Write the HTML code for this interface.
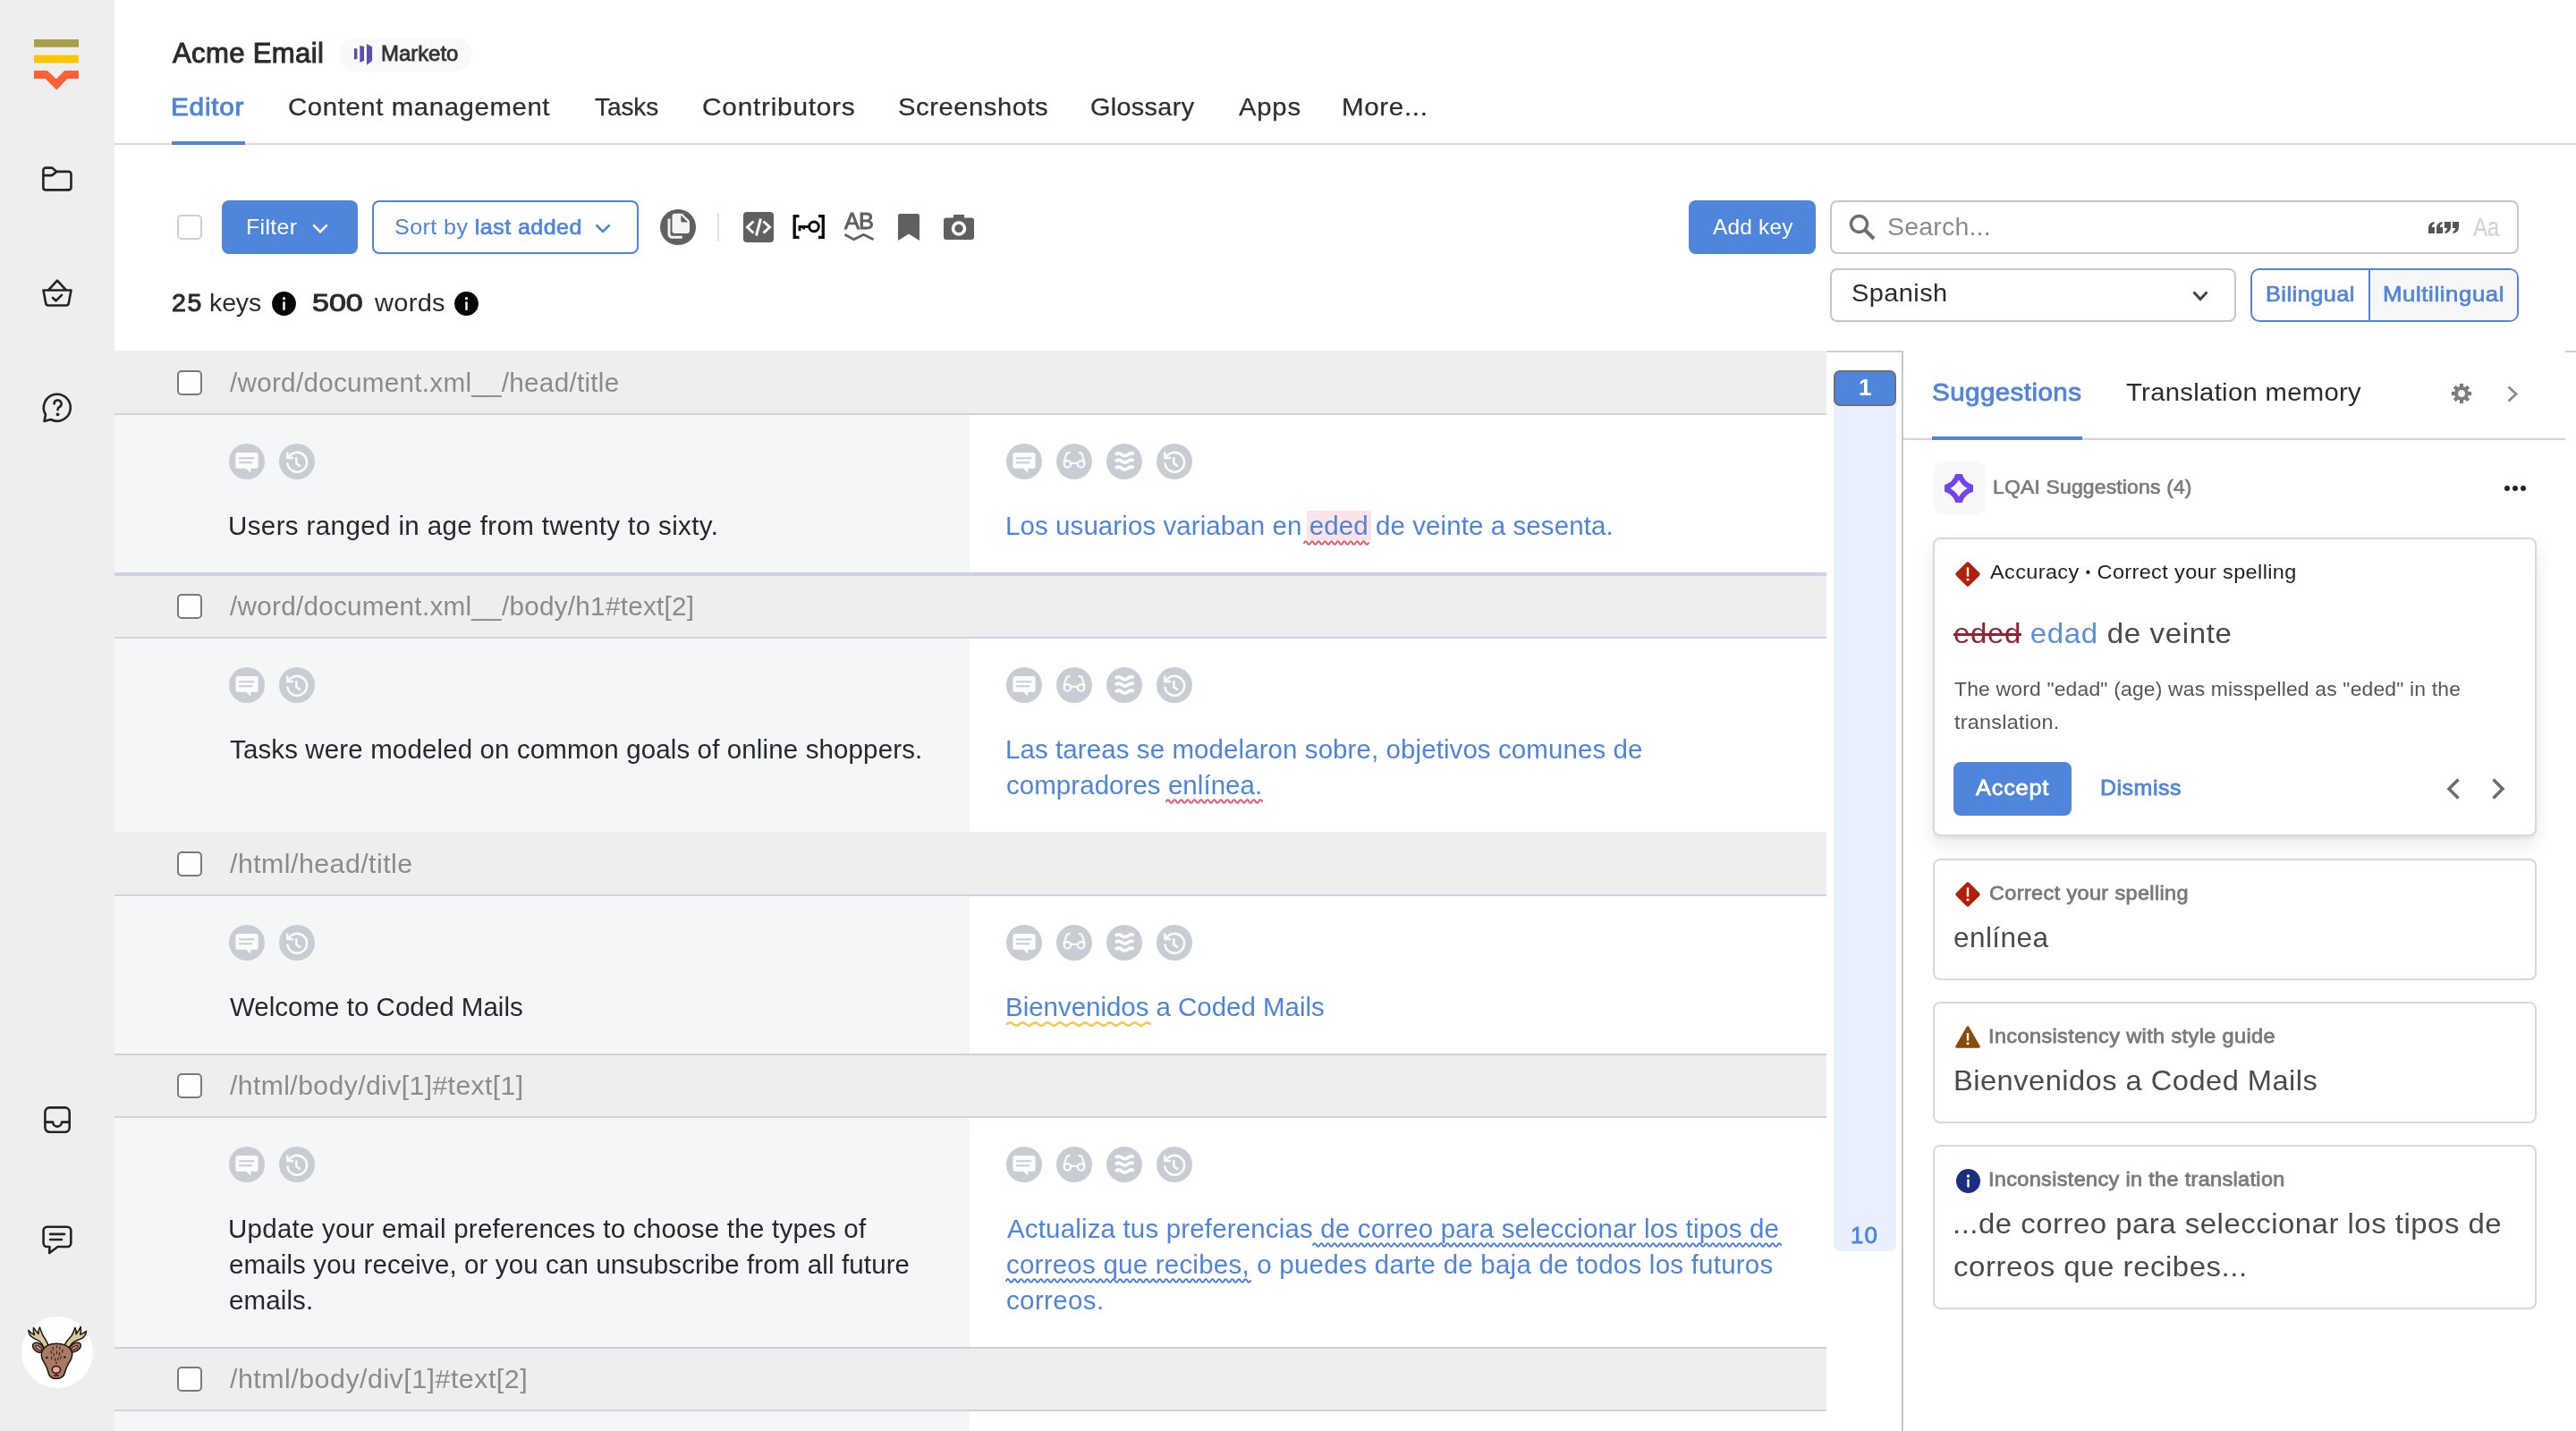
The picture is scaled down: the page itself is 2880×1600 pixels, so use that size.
<!DOCTYPE html>
<html lang="en"><head><meta charset="utf-8"><title>Acme Email - Editor</title>
<style>
*{margin:0;padding:0;box-sizing:border-box}
html,body{width:2880px;height:1600px;overflow:hidden;background:#fff}
@media (max-width:2000px){html{zoom:.5}}
body{position:relative;font-family:"Liberation Sans",sans-serif;color:#2b2b2b}
.a{position:absolute}
.t{position:absolute;white-space:nowrap;line-height:1;will-change:transform}
.t b{font-weight:700}
svg{position:absolute;overflow:visible}
.cb{position:absolute;width:28px;height:28px;border:2px solid #7a7a7a;border-radius:5px;background:#fff;left:198px}
.ic{position:absolute;width:40px;height:40px;border-radius:50%;background:#c9ccd2}
.hl{background:#fbe3e7;padding:0 3px;margin:0 -3px}
.hd{position:absolute;left:128px;width:1914px;background:#eeeeee}
.ln{position:absolute;left:128px;width:956px;height:2px;background:#d2d3d4}
.src{position:absolute;left:128px;width:956px;background:#f5f6f8}
.card{position:absolute;left:2160.500px;width:675.500px;border:2px solid #d9d9d9;border-radius:8px;background:#fff}
</style></head>
<body>
<div class="a" style="left:0;top:0;width:128px;height:1600px;background:#eeeeee"></div>
<svg style="left:38px;top:44px" width="50" height="57" viewBox="0 0 50 57"><rect x="0" y="0" width="50" height="8.700" fill="#a5a04b"/><rect x="0" y="17.600" width="50" height="8.900" fill="#fdc604"/><path d="M0 35.100h15l9.800 9.100 9.300-9.100H50v8.800H37.300l-12 12.500-12.500-12.500H0z" fill="#ff6036"/></svg>
<svg style="left:47px;top:186px" width="34" height="28" viewBox="0 0 34 28"><path d="M4.100 1.600H11l5.400 4.300H29.800a2.700 2.700 0 0 1 2.700 2.700V23.700a2.700 2.700 0 0 1-2.700 2.700H4.100a2.700 2.700 0 0 1-2.700-2.700V4.300a2.700 2.700 0 0 1 2.700-2.700zM1.400 10.100H11l5.400-4.200" fill="none" stroke="#242424" stroke-width="2.600" stroke-linejoin="round" stroke-linecap="round"/></svg>
<svg style="left:47px;top:312px" width="34" height="32" viewBox="0 0 34 32"><path d="M1.500 12.500h31l-2.700 14.500a3 3 0 0 1-3 2.500H7.200a3 3 0 0 1-3-2.500z M7 12.500 17 1.700 27 12.500 M12 21l3.500 3.300 6.500-6.500" fill="none" stroke="#242424" stroke-width="2.600" stroke-linejoin="round" stroke-linecap="round"/></svg>
<svg style="left:47px;top:438px" width="35" height="35" viewBox="0 0 35 35"><path d="M4 25.500A15 15 0 1 1 9.800 31L2.500 33z" fill="none" stroke="#242424" stroke-width="2.600" stroke-linejoin="round" stroke-linecap="round"/><path d="M13.600 13.500a4 4 0 1 1 5.600 3.700c-1.200.7-1.700 1.500-1.700 3" fill="none" stroke="#242424" stroke-width="2.600" stroke-linejoin="round" stroke-linecap="round"/><circle cx="17.500" cy="25.300" r="1.900" fill="#262626"/></svg>
<svg style="left:49px;top:1236.700px" width="30" height="30" viewBox="0 0 30 30"><rect x="1.400" y="1.400" width="27.300" height="27.300" rx="5" fill="none" stroke="#242424" stroke-width="2.600" stroke-linejoin="round" stroke-linecap="round"/><path d="M1.400 17.600h8.700c0 2.900 2.200 5 5 5s5-2.100 5-5h8.600" fill="none" stroke="#242424" stroke-width="2.600" stroke-linejoin="round" stroke-linecap="round"/></svg>
<svg style="left:47px;top:1369.500px" width="34" height="33" viewBox="0 0 34 33"><path d="M5.600 1.700H28.300a4 4 0 0 1 4 4V20a4 4 0 0 1-4 4H17.500l-9.300 7 .300-7H5.600a4 4 0 0 1-4-4V5.700a4 4 0 0 1 4-4zM9.100 9.900H25M9.100 16H22" fill="none" stroke="#242424" stroke-width="2.600" stroke-linejoin="round" stroke-linecap="round"/></svg>
<div class="a" style="left:24px;top:1472px;width:80px;height:80px;border-radius:50%;background:#fff"></div>
<svg style="left:24px;top:1472px" width="80" height="80" viewBox="0 0 80 80">
<g stroke="#1f160f" stroke-width="1.500" stroke-linejoin="round">
<path d="M30.500 33C28 27.500 26 24 24 21.500 22.500 18 21.500 15 20.400 12c-1.300 2.400-1.700 4.800-1.400 7.500C16.800 17 15 14.800 13.400 12.400c-.400 2.800 0 5.500 1.100 8.100C12 19.500 9.800 17.800 7.800 15.600c.300 3.300 1.800 5.800 4.200 7.600 2.600 2 5.500 2.800 8 4.300 2.400 1.800 4.200 4.500 5.500 8z" fill="#d8c99c"/>
<path d="M47.800 32.500C50.500 27 53.500 24 56 21.500 57.800 18.500 58.900 15.500 59.900 12.400c1.300 2.400 1.500 4.800 1.100 7.400 2.200-2.400 3.900-5.300 5.200-8.400.700 3 .500 5.900-.500 8.800 2.500-1 4.800-2.400 6.800-3.900-.200 3.500-1.800 6-4.500 7.800-2.800 1.800-6 2.300-8.800 3.800-2.600 1.500-4.500 3.800-6 7z" fill="#d8c99c"/>
<ellipse cx="18.600" cy="34.700" rx="6.800" ry="4.600" transform="rotate(38 18.600 34.700)" fill="#a87b66"/>
<ellipse cx="59.900" cy="34.500" rx="7.200" ry="4.400" transform="rotate(-33 59.900 34.500)" fill="#a87b66"/>
<ellipse cx="19.200" cy="35.300" rx="4" ry="1.700" transform="rotate(38 19.200 35.300)" fill="#d98a8c" stroke-width="1"/>
<ellipse cx="59.300" cy="35" rx="4.300" ry="1.600" transform="rotate(-33 59.300 35)" fill="#d98a8c" stroke-width="1"/>
<path d="M39.300 30.200C46 30.200 52 32 55.500 37.500 57.500 41.500 57 45.500 54.500 49.500 51 54.500 49.500 58 48.500 62.500 47.500 67.500 43.500 69.500 39 69.500S31 67.500 30 62.500C29 58 27.500 54.500 24.500 50 22 46 21.500 42 23.500 38 26.500 32 33 30.200 39.300 30.200z" fill="#a87b66"/>
<ellipse cx="38.900" cy="59.400" rx="4.600" ry="3.900" fill="#f4a58f"/>
<path d="M38.900 63.300v2.800M36 65.500c1.800 1 4 1 5.800 0" fill="none" stroke-width="1.200"/>
</g>
<g stroke="#4a2a1c" stroke-width="1.300" stroke-linecap="round"><path d="M35 34.500l.500 2.500M39.500 32.500v2.500M43 34l-.400 2.600M33 38.500l.500 2.600M36 41.500l.400 2.500M39.500 39v2.600M42.500 40.500l-.300 2.600M46 37.500l-.500 2.500M33.500 45.500l.400 2M37.500 47l.400 2.400M41 46l-.300 2.400M44 45l-.400 2.200M39 51v1.600"/></g>
<circle cx="28.400" cy="46" r="1.200" fill="#1f160f"/><circle cx="48.400" cy="45.500" r="1.200" fill="#1f160f"/>
</svg>
<div class="a" style="left:128px;top:160px;width:2752px;height:2px;background:#dddddd"></div>
<div class="a" style="left:192px;top:158px;width:82px;height:4px;background:#4f85db"></div>
<div class="a" style="left:379px;top:42px;width:149px;height:38px;border-radius:19px;background:#f9f9f9"></div>
<svg style="left:395px;top:48px" width="22" height="26" viewBox="0 0 22 26"><g fill="#5c4db1"><path d="M.900 5.900l3.500.500v11.300l-3.500 1z"/><path d="M7.300 3l4.700 1v16.100l-4.700 1.700z"/><path d="M15 .900l6.100 3.500V20L15 24.800z"/></g></svg>
<div class="a" style="left:198px;top:240px;width:28px;height:28px;border:2px solid #cfcfcf;border-radius:5px;background:#fff"></div>
<div class="a" style="left:248px;top:224px;width:152px;height:60px;border-radius:8px;background:#4f85db"></div>
<svg style="left:349px;top:250px" width="18" height="11" viewBox="0 0 18 11"><path d="M1.200 1.300l7.800 8 7.800-8" fill="none" stroke="#fff" stroke-width="2.500"/></svg>
<div class="a" style="left:416px;top:224px;width:298px;height:60px;border-radius:8px;border:2px solid #4f85db;background:#fff"></div>
<svg style="left:665px;top:250px" width="18" height="11" viewBox="0 0 18 11"><path d="M1.500 1.500l7.500 7.500 7.500-7.500" fill="none" stroke="#4f85db" stroke-width="2.600"/></svg>
<svg style="left:738px;top:234px" width="40" height="40" viewBox="0 0 40 40"><circle cx="20" cy="20" r="20" fill="#606060"/><path d="M16.500 4.700h8.200l8.300 8.300v11a3 3 0 0 1-3 3H16.500a3 3 0 0 1-3-3V7.700a3 3 0 0 1 3-3z" fill="#f4f4f4"/><path d="M23.300 6.600v6.400a1.500 1.500 0 0 0 1.500 1.500h6.400z" fill="#606060"/><path d="M10 10.400v17.600a3.200 3.200 0 0 0 3.200 3.200H24.800" fill="none" stroke="#f4f4f4" stroke-width="2.900"/></svg>
<div class="a" style="left:802px;top:238px;width:2px;height:32px;background:#e0e0e0"></div>
<svg style="left:831px;top:237px" width="34" height="34" viewBox="0 0 34 34"><rect width="34" height="34" rx="4" fill="#606060"/><path d="M11.500 10.500l-7 6.500 7 6.500M22.500 10.500l7 6.500-7 6.500M19.500 7.500l-5 19" fill="none" stroke="#fff" stroke-width="3"/></svg>
<svg style="left:886px;top:240px" width="37" height="27" viewBox="0 0 37 27"><path d="M7.500 1.700H2.200v23.600h5.300M29 1.700h5.300v23.600H29" fill="none" stroke="#0c0c0c" stroke-width="3.300"/><circle cx="24" cy="13.400" r="5.300" fill="none" stroke="#0c0c0c" stroke-width="3"/><path d="M18.700 13.400H6.500M8 13.400v4.800M12.600 13.400v3.200" fill="none" stroke="#0c0c0c" stroke-width="3"/></svg>
<div class="t" style="left:943.800px;top:235.31px;font-size:25.500px;color:#606060;letter-spacing:-.9px;-webkit-text-stroke:.9px #606060">AB</div>
<svg style="left:943.500px;top:260.500px" width="34" height="9" viewBox="0 0 34 9"><path d="M.500 1.300l10 5.400 11-5.400 11 5.400" fill="none" stroke="#606060" stroke-width="2.800"/></svg>
<svg style="left:1004px;top:239px" width="24" height="30" viewBox="0 0 24 30"><path d="M2.500 0h19a2.500 2.500 0 0 1 2.500 2.500V30l-12-7.500L0 30V2.500A2.500 2.500 0 0 1 2.500 0z" fill="#606060"/></svg>
<svg style="left:1055px;top:240px" width="34" height="28" viewBox="0 0 34 28"><path d="M11 0h12v4h-12z M3 3.500h28a3 3 0 0 1 3 3V25a3 3 0 0 1-3 3H3a3 3 0 0 1-3-3V6.500a3 3 0 0 1 3-3z" fill="#606060"/><circle cx="17" cy="15.500" r="6.500" fill="none" stroke="#fff" stroke-width="3.600"/></svg>
<svg style="left:304.2px;top:326.200px" width="27" height="27" viewBox="0 0 27 27"><circle cx="13.500" cy="13.500" r="13.400" fill="#050505"/><circle cx="13.500" cy="7.700" r="1.600" fill="#fff"/><rect x="12.300" y="11.300" width="2.400" height="9.500" fill="#fff"/></svg>
<svg style="left:508.4px;top:326.200px" width="27" height="27" viewBox="0 0 27 27"><circle cx="13.500" cy="13.500" r="13.400" fill="#050505"/><circle cx="13.500" cy="7.700" r="1.600" fill="#fff"/><rect x="12.300" y="11.300" width="2.400" height="9.500" fill="#fff"/></svg>
<div class="a" style="left:1888px;top:224px;width:142px;height:60px;border-radius:8px;background:#4f85db"></div>
<div class="a" style="left:2046px;top:224px;width:770px;height:60px;border-radius:8px;border:2px solid #c6c6c6;background:#fff"></div>
<svg style="left:2067px;top:239px" width="30" height="30" viewBox="0 0 30 30"><circle cx="11.500" cy="11.500" r="9" fill="none" stroke="#6d6d6d" stroke-width="3.400"/><path d="M18 18l10 10" stroke="#6d6d6d" stroke-width="4" fill="none"/></svg>
<svg style="left:2715px;top:248px" width="34" height="13" viewBox="0 0 34 13"><g fill="#555"><path d="M0 13V7.500C0 3 2.500.600 6.500 0v2.300C4.800 2.800 4 4 4 6h3v7z"/><path d="M9 13V7.500C9 3 11.500.600 15.500 0v2.300C13.800 2.800 13 4 13 6h3v7z"/><path d="M25 0v5.500C25 10 22.500 12.400 18.500 13v-2.300c1.700-.5 2.500-1.700 2.500-3.700h-3V0z"/><path d="M34 0v5.500C34 10 31.500 12.400 27.500 13v-2.300c1.700-.5 2.500-1.700 2.500-3.700h-3V0z"/></g></svg>
<div class="a" style="left:2046px;top:300px;width:454px;height:60px;border-radius:8px;border:2px solid #c6c6c6;background:#fff"></div>
<svg style="left:2451px;top:325px" width="18" height="12" viewBox="0 0 18 12"><path d="M1.500 1.500l7.500 8 7.500-8" fill="none" stroke="#444" stroke-width="3"/></svg>
<div class="a" style="left:2516px;top:300px;width:300px;height:60px;border-radius:10px;border:2px solid #4f85db;background:#fff;overflow:hidden"><div class="a" style="left:130px;top:0;width:2px;height:60px;background:#4f85db"></div><div class="a" style="left:132px;top:0;width:170px;height:60px;background:#f7f7f7"></div></div>
<div class="hd" style="top:392px;height:70px"></div>
<div class="ln" style="top:462px"></div><div class="ln" style="top:462px;left:1084px;width:958px;background:#d2d2d5"></div>
<div class="src" style="top:464px;height:176px"></div>
<div class="cb" style="top:414px"></div>
<div class="ic" style="left:256px;top:496px"></div>
<svg style="left:256px;top:496px" width="40" height="40" viewBox="0 0 40 40"><path d="M10 10.100h20a2.600 2.600 0 0 1 2.600 2.600v12.500a2.600 2.600 0 0 1-2.600 2.600h-5.700v4.600l-5.300-4.600H10a2.600 2.600 0 0 1-2.600-2.600V12.700A2.600 2.600 0 0 1 10 10.100z" fill="#fafbfc"/><path d="M11.100 16.200h17.200M11.100 21.300h15" stroke="#c9ccd2" stroke-width="2" fill="none"/></svg>
<div class="ic" style="left:312px;top:496px"></div>
<svg style="left:312px;top:496px" width="40" height="40" viewBox="0 0 40 40"><path d="M10.300 16.200A10.900 10.900 0 1 1 9.300 21.500" fill="none" stroke="#fafbfc" stroke-width="2.600"/><path d="M9.300 9.600v6.300h6.800" fill="none" stroke="#fafbfc" stroke-width="2.500"/><path d="M19.400 15.200v7.200l4.600 3" fill="none" stroke="#fafbfc" stroke-width="2.500"/></svg>
<div class="ic" style="left:1125px;top:496px"></div>
<svg style="left:1125px;top:496px" width="40" height="40" viewBox="0 0 40 40"><path d="M10 10.100h20a2.600 2.600 0 0 1 2.600 2.600v12.500a2.600 2.600 0 0 1-2.600 2.600h-5.700v4.600l-5.300-4.600H10a2.600 2.600 0 0 1-2.600-2.600V12.700A2.600 2.600 0 0 1 10 10.100z" fill="#fafbfc"/><path d="M11.100 16.200h17.200M11.100 21.300h15" stroke="#c9ccd2" stroke-width="2" fill="none"/></svg>
<div class="ic" style="left:1181px;top:496px"></div>
<svg style="left:1181px;top:496px" width="40" height="40" viewBox="0 0 40 40"><circle cx="12.400" cy="22.900" r="3.700" fill="none" stroke="#fafbfc" stroke-width="2.300"/><circle cx="27.600" cy="22.900" r="3.700" fill="none" stroke="#fafbfc" stroke-width="2.300"/><path d="M16 21.800h8" fill="none" stroke="#fafbfc" stroke-width="2.200"/><path d="M8.300 21.500l2.900-9.300c.500-1.600 2-2.300 4.300-1.800M31.700 21.500l-2.900-9.300c-.500-1.600-2-2.300-4.300-1.800" fill="none" stroke="#fafbfc" stroke-width="2.200"/></svg>
<div class="ic" style="left:1237px;top:496px"></div>
<svg style="left:1237px;top:496px" width="40" height="40" viewBox="0 0 40 40"><path d="M10 12.5c2.400-2.200 4.600-2.200 7 -.300s4.800 2 7.200 0 4.200-2 6.300-.300" fill="none" stroke="#fafbfc" stroke-width="3.800"/><path d="M10 19.9c2.400-2.200 4.600-2.200 7 -.300s4.800 2 7.200 0 4.200-2 6.300-.300" fill="none" stroke="#fafbfc" stroke-width="3.800"/><path d="M10 27.7c2.400-2.200 4.600-2.200 7 -.300s4.800 2 7.200 0 4.200-2 6.300-.300" fill="none" stroke="#fafbfc" stroke-width="3.800"/></svg>
<div class="ic" style="left:1293px;top:496px"></div>
<svg style="left:1293px;top:496px" width="40" height="40" viewBox="0 0 40 40"><path d="M10.300 16.200A10.900 10.900 0 1 1 9.300 21.500" fill="none" stroke="#fafbfc" stroke-width="2.600"/><path d="M9.300 9.600v6.300h6.800" fill="none" stroke="#fafbfc" stroke-width="2.500"/><path d="M19.400 15.200v7.200l4.600 3" fill="none" stroke="#fafbfc" stroke-width="2.500"/></svg>
<div class="hd" style="top:644px;height:68px"></div>
<div class="ln" style="top:712px"></div><div class="ln" style="top:712px;left:1084px;width:958px;background:#d1d0e0"></div>
<div class="src" style="top:714px;height:216px"></div>
<div class="cb" style="top:664px"></div>
<div class="ic" style="left:256px;top:746px"></div>
<svg style="left:256px;top:746px" width="40" height="40" viewBox="0 0 40 40"><path d="M10 10.100h20a2.600 2.600 0 0 1 2.600 2.600v12.500a2.600 2.600 0 0 1-2.600 2.600h-5.700v4.600l-5.300-4.600H10a2.600 2.600 0 0 1-2.600-2.600V12.700A2.600 2.600 0 0 1 10 10.100z" fill="#fafbfc"/><path d="M11.100 16.200h17.200M11.100 21.300h15" stroke="#c9ccd2" stroke-width="2" fill="none"/></svg>
<div class="ic" style="left:312px;top:746px"></div>
<svg style="left:312px;top:746px" width="40" height="40" viewBox="0 0 40 40"><path d="M10.300 16.200A10.900 10.900 0 1 1 9.300 21.500" fill="none" stroke="#fafbfc" stroke-width="2.600"/><path d="M9.300 9.600v6.300h6.800" fill="none" stroke="#fafbfc" stroke-width="2.500"/><path d="M19.400 15.200v7.200l4.600 3" fill="none" stroke="#fafbfc" stroke-width="2.500"/></svg>
<div class="ic" style="left:1125px;top:746px"></div>
<svg style="left:1125px;top:746px" width="40" height="40" viewBox="0 0 40 40"><path d="M10 10.100h20a2.600 2.600 0 0 1 2.600 2.600v12.500a2.600 2.600 0 0 1-2.600 2.600h-5.700v4.600l-5.300-4.600H10a2.600 2.600 0 0 1-2.600-2.600V12.700A2.600 2.600 0 0 1 10 10.100z" fill="#fafbfc"/><path d="M11.100 16.200h17.200M11.100 21.300h15" stroke="#c9ccd2" stroke-width="2" fill="none"/></svg>
<div class="ic" style="left:1181px;top:746px"></div>
<svg style="left:1181px;top:746px" width="40" height="40" viewBox="0 0 40 40"><circle cx="12.400" cy="22.900" r="3.700" fill="none" stroke="#fafbfc" stroke-width="2.300"/><circle cx="27.600" cy="22.900" r="3.700" fill="none" stroke="#fafbfc" stroke-width="2.300"/><path d="M16 21.800h8" fill="none" stroke="#fafbfc" stroke-width="2.200"/><path d="M8.300 21.500l2.900-9.300c.500-1.600 2-2.300 4.300-1.800M31.700 21.500l-2.900-9.300c-.500-1.600-2-2.300-4.300-1.800" fill="none" stroke="#fafbfc" stroke-width="2.200"/></svg>
<div class="ic" style="left:1237px;top:746px"></div>
<svg style="left:1237px;top:746px" width="40" height="40" viewBox="0 0 40 40"><path d="M10 12.5c2.400-2.200 4.600-2.200 7 -.300s4.800 2 7.200 0 4.200-2 6.300-.300" fill="none" stroke="#fafbfc" stroke-width="3.800"/><path d="M10 19.9c2.400-2.200 4.600-2.200 7 -.300s4.800 2 7.200 0 4.200-2 6.300-.300" fill="none" stroke="#fafbfc" stroke-width="3.800"/><path d="M10 27.7c2.400-2.200 4.600-2.200 7 -.300s4.800 2 7.200 0 4.200-2 6.300-.300" fill="none" stroke="#fafbfc" stroke-width="3.800"/></svg>
<div class="ic" style="left:1293px;top:746px"></div>
<svg style="left:1293px;top:746px" width="40" height="40" viewBox="0 0 40 40"><path d="M10.300 16.200A10.900 10.900 0 1 1 9.300 21.500" fill="none" stroke="#fafbfc" stroke-width="2.600"/><path d="M9.300 9.600v6.300h6.800" fill="none" stroke="#fafbfc" stroke-width="2.500"/><path d="M19.400 15.200v7.200l4.600 3" fill="none" stroke="#fafbfc" stroke-width="2.500"/></svg>
<div class="hd" style="top:930px;height:70px"></div>
<div class="ln" style="top:1000px"></div><div class="ln" style="top:1000px;left:1084px;width:958px;background:#d1d0e0"></div>
<div class="src" style="top:1002px;height:176px"></div>
<div class="cb" style="top:952px"></div>
<div class="ic" style="left:256px;top:1034px"></div>
<svg style="left:256px;top:1034px" width="40" height="40" viewBox="0 0 40 40"><path d="M10 10.100h20a2.600 2.600 0 0 1 2.600 2.600v12.500a2.600 2.600 0 0 1-2.600 2.600h-5.700v4.600l-5.300-4.600H10a2.600 2.600 0 0 1-2.600-2.600V12.700A2.600 2.600 0 0 1 10 10.100z" fill="#fafbfc"/><path d="M11.100 16.200h17.200M11.100 21.300h15" stroke="#c9ccd2" stroke-width="2" fill="none"/></svg>
<div class="ic" style="left:312px;top:1034px"></div>
<svg style="left:312px;top:1034px" width="40" height="40" viewBox="0 0 40 40"><path d="M10.300 16.200A10.900 10.900 0 1 1 9.300 21.500" fill="none" stroke="#fafbfc" stroke-width="2.600"/><path d="M9.300 9.600v6.300h6.800" fill="none" stroke="#fafbfc" stroke-width="2.500"/><path d="M19.400 15.200v7.200l4.600 3" fill="none" stroke="#fafbfc" stroke-width="2.500"/></svg>
<div class="ic" style="left:1125px;top:1034px"></div>
<svg style="left:1125px;top:1034px" width="40" height="40" viewBox="0 0 40 40"><path d="M10 10.100h20a2.600 2.600 0 0 1 2.600 2.600v12.500a2.600 2.600 0 0 1-2.600 2.600h-5.700v4.600l-5.300-4.600H10a2.600 2.600 0 0 1-2.600-2.600V12.700A2.600 2.600 0 0 1 10 10.100z" fill="#fafbfc"/><path d="M11.100 16.200h17.200M11.100 21.300h15" stroke="#c9ccd2" stroke-width="2" fill="none"/></svg>
<div class="ic" style="left:1181px;top:1034px"></div>
<svg style="left:1181px;top:1034px" width="40" height="40" viewBox="0 0 40 40"><circle cx="12.400" cy="22.900" r="3.700" fill="none" stroke="#fafbfc" stroke-width="2.300"/><circle cx="27.600" cy="22.900" r="3.700" fill="none" stroke="#fafbfc" stroke-width="2.300"/><path d="M16 21.800h8" fill="none" stroke="#fafbfc" stroke-width="2.200"/><path d="M8.300 21.500l2.900-9.300c.500-1.600 2-2.300 4.300-1.800M31.700 21.500l-2.900-9.300c-.500-1.600-2-2.300-4.300-1.800" fill="none" stroke="#fafbfc" stroke-width="2.200"/></svg>
<div class="ic" style="left:1237px;top:1034px"></div>
<svg style="left:1237px;top:1034px" width="40" height="40" viewBox="0 0 40 40"><path d="M10 12.5c2.400-2.200 4.600-2.200 7 -.300s4.800 2 7.200 0 4.200-2 6.300-.300" fill="none" stroke="#fafbfc" stroke-width="3.800"/><path d="M10 19.9c2.400-2.200 4.600-2.200 7 -.300s4.800 2 7.200 0 4.200-2 6.300-.300" fill="none" stroke="#fafbfc" stroke-width="3.800"/><path d="M10 27.7c2.400-2.200 4.600-2.200 7 -.300s4.800 2 7.200 0 4.200-2 6.300-.300" fill="none" stroke="#fafbfc" stroke-width="3.800"/></svg>
<div class="ic" style="left:1293px;top:1034px"></div>
<svg style="left:1293px;top:1034px" width="40" height="40" viewBox="0 0 40 40"><path d="M10.300 16.200A10.900 10.900 0 1 1 9.300 21.500" fill="none" stroke="#fafbfc" stroke-width="2.600"/><path d="M9.300 9.600v6.300h6.800" fill="none" stroke="#fafbfc" stroke-width="2.500"/><path d="M19.400 15.200v7.200l4.600 3" fill="none" stroke="#fafbfc" stroke-width="2.500"/></svg>
<div class="hd" style="top:1180px;height:68px"></div>
<div class="ln" style="top:1248px"></div><div class="ln" style="top:1248px;left:1084px;width:958px;background:#d1d0e0"></div>
<div class="src" style="top:1250px;height:256px"></div>
<div class="cb" style="top:1200px"></div>
<div class="ic" style="left:256px;top:1282px"></div>
<svg style="left:256px;top:1282px" width="40" height="40" viewBox="0 0 40 40"><path d="M10 10.100h20a2.600 2.600 0 0 1 2.600 2.600v12.500a2.600 2.600 0 0 1-2.600 2.600h-5.700v4.600l-5.300-4.600H10a2.600 2.600 0 0 1-2.600-2.600V12.700A2.600 2.600 0 0 1 10 10.100z" fill="#fafbfc"/><path d="M11.100 16.200h17.200M11.100 21.300h15" stroke="#c9ccd2" stroke-width="2" fill="none"/></svg>
<div class="ic" style="left:312px;top:1282px"></div>
<svg style="left:312px;top:1282px" width="40" height="40" viewBox="0 0 40 40"><path d="M10.300 16.200A10.900 10.900 0 1 1 9.300 21.500" fill="none" stroke="#fafbfc" stroke-width="2.600"/><path d="M9.300 9.600v6.300h6.800" fill="none" stroke="#fafbfc" stroke-width="2.500"/><path d="M19.400 15.200v7.200l4.600 3" fill="none" stroke="#fafbfc" stroke-width="2.500"/></svg>
<div class="ic" style="left:1125px;top:1282px"></div>
<svg style="left:1125px;top:1282px" width="40" height="40" viewBox="0 0 40 40"><path d="M10 10.100h20a2.600 2.600 0 0 1 2.600 2.600v12.500a2.600 2.600 0 0 1-2.600 2.600h-5.700v4.600l-5.300-4.600H10a2.600 2.600 0 0 1-2.600-2.600V12.700A2.600 2.600 0 0 1 10 10.100z" fill="#fafbfc"/><path d="M11.100 16.200h17.200M11.100 21.300h15" stroke="#c9ccd2" stroke-width="2" fill="none"/></svg>
<div class="ic" style="left:1181px;top:1282px"></div>
<svg style="left:1181px;top:1282px" width="40" height="40" viewBox="0 0 40 40"><circle cx="12.400" cy="22.900" r="3.700" fill="none" stroke="#fafbfc" stroke-width="2.300"/><circle cx="27.600" cy="22.900" r="3.700" fill="none" stroke="#fafbfc" stroke-width="2.300"/><path d="M16 21.800h8" fill="none" stroke="#fafbfc" stroke-width="2.200"/><path d="M8.300 21.500l2.900-9.300c.500-1.600 2-2.300 4.300-1.800M31.700 21.500l-2.900-9.300c-.500-1.600-2-2.300-4.300-1.800" fill="none" stroke="#fafbfc" stroke-width="2.200"/></svg>
<div class="ic" style="left:1237px;top:1282px"></div>
<svg style="left:1237px;top:1282px" width="40" height="40" viewBox="0 0 40 40"><path d="M10 12.5c2.400-2.200 4.600-2.200 7 -.300s4.800 2 7.200 0 4.200-2 6.300-.300" fill="none" stroke="#fafbfc" stroke-width="3.800"/><path d="M10 19.9c2.400-2.200 4.600-2.200 7 -.300s4.800 2 7.200 0 4.200-2 6.300-.300" fill="none" stroke="#fafbfc" stroke-width="3.800"/><path d="M10 27.7c2.400-2.200 4.600-2.200 7 -.300s4.800 2 7.200 0 4.200-2 6.300-.300" fill="none" stroke="#fafbfc" stroke-width="3.800"/></svg>
<div class="ic" style="left:1293px;top:1282px"></div>
<svg style="left:1293px;top:1282px" width="40" height="40" viewBox="0 0 40 40"><path d="M10.300 16.200A10.900 10.900 0 1 1 9.300 21.500" fill="none" stroke="#fafbfc" stroke-width="2.600"/><path d="M9.300 9.600v6.300h6.800" fill="none" stroke="#fafbfc" stroke-width="2.500"/><path d="M19.400 15.200v7.200l4.600 3" fill="none" stroke="#fafbfc" stroke-width="2.500"/></svg>
<div class="hd" style="top:1508px;height:68px"></div>
<div class="ln" style="top:1576px"></div><div class="ln" style="top:1576px;left:1084px;width:958px;background:#d1d0e0"></div>
<div class="src" style="top:1578px;height:22px"></div>
<div class="cb" style="top:1528px"></div>
<div class="a" style="left:128px;top:640px;width:1914px;height:4px;background:#cdd0e4"></div>
<div class="a" style="left:128px;top:1178px;width:1914px;height:2px;background:#d0d1d4"></div>
<div class="a" style="left:128px;top:1506px;width:1914px;height:2px;background:#d0d1d4"></div>
<svg style="left:1458px;top:601.6px" width="72.0" height="10" viewBox="0 0 72.0 10"><path d="M0 5q1.80 -3.60 3.60 0t3.60 0t3.60 0t3.60 0t3.60 0t3.60 0t3.60 0t3.60 0t3.60 0t3.60 0t3.60 0t3.60 0t3.60 0t3.60 0t3.60 0t3.60 0t3.60 0t3.60 0t3.60 0t3.60 0" fill="none" stroke="#e0596e" stroke-width="2" stroke-linecap="round"/></svg>
<svg style="left:1304px;top:891px" width="107.0" height="10" viewBox="0 0 107.0 10"><path d="M0 5q1.84 -3.60 3.69 0t3.69 0t3.69 0t3.69 0t3.69 0t3.69 0t3.69 0t3.69 0t3.69 0t3.69 0t3.69 0t3.69 0t3.69 0t3.69 0t3.69 0t3.69 0t3.69 0t3.69 0t3.69 0t3.69 0t3.69 0t3.69 0t3.69 0t3.69 0t3.69 0t3.69 0t3.69 0t3.69 0t3.69 0" fill="none" stroke="#e0596e" stroke-width="2" stroke-linecap="round"/></svg>
<svg style="left:1126px;top:1139.5px" width="160.0" height="10" viewBox="0 0 160.0 10"><path d="M0 5q3.48 -3.20 6.96 0t6.96 0t6.96 0t6.96 0t6.96 0t6.96 0t6.96 0t6.96 0t6.96 0t6.96 0t6.96 0t6.96 0t6.96 0t6.96 0t6.96 0t6.96 0t6.96 0t6.96 0t6.96 0t6.96 0t6.96 0t6.96 0t6.96 0" fill="none" stroke="#f6c952" stroke-width="2.5" stroke-linecap="round"/></svg>
<svg style="left:1468px;top:1387.4px" width="523.4" height="10" viewBox="0 0 523.4 10"><path d="M0 5q1.86 -3.40 3.71 0t3.71 0t3.71 0t3.71 0t3.71 0t3.71 0t3.71 0t3.71 0t3.71 0t3.71 0t3.71 0t3.71 0t3.71 0t3.71 0t3.71 0t3.71 0t3.71 0t3.71 0t3.71 0t3.71 0t3.71 0t3.71 0t3.71 0t3.71 0t3.71 0t3.71 0t3.71 0t3.71 0t3.71 0t3.71 0t3.71 0t3.71 0t3.71 0t3.71 0t3.71 0t3.71 0t3.71 0t3.71 0t3.71 0t3.71 0t3.71 0t3.71 0t3.71 0t3.71 0t3.71 0t3.71 0t3.71 0t3.71 0t3.71 0t3.71 0t3.71 0t3.71 0t3.71 0t3.71 0t3.71 0t3.71 0t3.71 0t3.71 0t3.71 0t3.71 0t3.71 0t3.71 0t3.71 0t3.71 0t3.71 0t3.71 0t3.71 0t3.71 0t3.71 0t3.71 0t3.71 0t3.71 0t3.71 0t3.71 0t3.71 0t3.71 0t3.71 0t3.71 0t3.71 0t3.71 0t3.71 0t3.71 0t3.71 0t3.71 0t3.71 0t3.71 0t3.71 0t3.71 0t3.71 0t3.71 0t3.71 0t3.71 0t3.71 0t3.71 0t3.71 0t3.71 0t3.71 0t3.71 0t3.71 0t3.71 0t3.71 0t3.71 0t3.71 0t3.71 0t3.71 0t3.71 0t3.71 0t3.71 0t3.71 0t3.71 0t3.71 0t3.71 0t3.71 0t3.71 0t3.71 0t3.71 0t3.71 0t3.71 0t3.71 0t3.71 0t3.71 0t3.71 0t3.71 0t3.71 0t3.71 0t3.71 0t3.71 0t3.71 0t3.71 0t3.71 0t3.71 0t3.71 0t3.71 0t3.71 0t3.71 0t3.71 0t3.71 0t3.71 0t3.71 0t3.71 0t3.71 0" fill="none" stroke="#4a7bd8" stroke-width="1.9" stroke-linecap="round"/></svg>
<svg style="left:1124.5px;top:1427.4px" width="272.8" height="10" viewBox="0 0 272.8 10"><path d="M0 5q1.84 -3.40 3.69 0t3.69 0t3.69 0t3.69 0t3.69 0t3.69 0t3.69 0t3.69 0t3.69 0t3.69 0t3.69 0t3.69 0t3.69 0t3.69 0t3.69 0t3.69 0t3.69 0t3.69 0t3.69 0t3.69 0t3.69 0t3.69 0t3.69 0t3.69 0t3.69 0t3.69 0t3.69 0t3.69 0t3.69 0t3.69 0t3.69 0t3.69 0t3.69 0t3.69 0t3.69 0t3.69 0t3.69 0t3.69 0t3.69 0t3.69 0t3.69 0t3.69 0t3.69 0t3.69 0t3.69 0t3.69 0t3.69 0t3.69 0t3.69 0t3.69 0t3.69 0t3.69 0t3.69 0t3.69 0t3.69 0t3.69 0t3.69 0t3.69 0t3.69 0t3.69 0t3.69 0t3.69 0t3.69 0t3.69 0t3.69 0t3.69 0t3.69 0t3.69 0t3.69 0t3.69 0t3.69 0t3.69 0t3.69 0t3.69 0" fill="none" stroke="#4a7bd8" stroke-width="1.9" stroke-linecap="round"/></svg>
<div class="a" style="left:2042px;top:392px;width:86px;height:2px;background:#cfcfcf"></div>
<div class="a" style="left:2868px;top:392px;width:12px;height:2px;background:#cfcfcf"></div>
<div class="a" style="left:2126px;top:392px;width:2px;height:1208px;background:#c9c9c9"></div>
<div class="a" style="left:2050px;top:440px;width:70px;height:959px;background:#e9effc;border-radius:0 0 7px 7px"></div>
<div class="a" style="left:2050px;top:414px;width:70px;height:40px;border-radius:7px;background:#4f85db;border:2px solid #6b7079"></div>
<div class="a" style="left:2128px;top:490px;width:740px;height:2px;background:#d2d2d2"></div>
<div class="a" style="left:2160px;top:488px;width:168px;height:4px;background:#4f85db"></div>
<svg style="left:2741px;top:429px" width="22" height="22" viewBox="-11 -11 22 22"><g fill="#7c7c7c"><rect x="-2.100" y="-11" width="4.200" height="6" transform="rotate(0)"/><rect x="-2.100" y="-11" width="4.200" height="6" transform="rotate(45)"/><rect x="-2.100" y="-11" width="4.200" height="6" transform="rotate(90)"/><rect x="-2.100" y="-11" width="4.200" height="6" transform="rotate(135)"/><rect x="-2.100" y="-11" width="4.200" height="6" transform="rotate(180)"/><rect x="-2.100" y="-11" width="4.200" height="6" transform="rotate(225)"/><rect x="-2.100" y="-11" width="4.200" height="6" transform="rotate(270)"/><rect x="-2.100" y="-11" width="4.200" height="6" transform="rotate(315)"/></g><circle r="5.900" fill="none" stroke="#7c7c7c" stroke-width="4"/></svg>
<svg style="left:2803px;top:431px" width="12" height="19" viewBox="0 0 12 19"><path d="M1.500 1.500l8.500 8-8.500 8" fill="none" stroke="#8a8a8a" stroke-width="2.800"/></svg>
<div class="a" style="left:2161px;top:516px;width:59px;height:59px;border-radius:12px;background:#f8f8f8"></div>
<svg style="left:2174px;top:529.500px" width="32" height="32" viewBox="0 0 32 32"><path d="M12.300 0h7.400Q22.500 9.500 32 12.300v7.400Q22.500 22.500 19.700 32h-7.400Q9.500 22.500 0 19.700v-7.400Q9.500 9.500 12.300 0z" fill="#7045ea"/><path d="M16 6.500Q19.450 12.550 25.500 16 19.450 19.450 16 25.500 12.550 19.450 6.500 16 12.550 12.550 16 6.500z" fill="#fcf3fe"/></svg>
<div class="a" style="left:2799.7px;top:542.700px;width:6.600px;height:6.600px;border-radius:50%;background:#222"></div>
<div class="a" style="left:2808.7px;top:542.700px;width:6.600px;height:6.600px;border-radius:50%;background:#222"></div>
<div class="a" style="left:2817.7px;top:542.700px;width:6.600px;height:6.600px;border-radius:50%;background:#222"></div>
<div class="card" style="top:601px;height:334px;box-shadow:0 3px 3px rgba(0,0,0,.05),0 10px 22px rgba(0,0,0,.085)"></div>
<div class="card" style="top:960px;height:136px"></div>
<div class="card" style="top:1120px;height:136px"></div>
<div class="card" style="top:1280px;height:184px"></div>
<svg style="left:2185px;top:627px" width="30" height="30" viewBox="0 0 30 30"><rect x="4.600" y="4.600" width="20.800" height="20.800" rx="2.600" transform="rotate(45 15 15)" fill="#b3200a"/><rect x="13.800" y="7.500" width="2.400" height="10" fill="#fff"/><circle cx="15" cy="21" r="1.600" fill="#fff"/></svg>
<svg style="left:2185px;top:985px" width="30" height="30" viewBox="0 0 30 30"><rect x="4.600" y="4.600" width="20.800" height="20.800" rx="2.600" transform="rotate(45 15 15)" fill="#b3200a"/><rect x="13.800" y="7.500" width="2.400" height="10" fill="#fff"/><circle cx="15" cy="21" r="1.600" fill="#fff"/></svg>
<svg style="left:2186px;top:1147px" width="28" height="25" viewBox="0 0 28 25"><path d="M14 1.800 26.300 23.200H1.700z" fill="#8b4a0c" stroke="#8b4a0c" stroke-width="3" stroke-linejoin="round"/><rect x="12.800" y="8" width="2.400" height="8.500" fill="#fff"/><circle cx="14" cy="19.800" r="1.500" fill="#fff"/></svg>
<svg style="left:2186.500px;top:1306.500px" width="27" height="27" viewBox="0 0 27 27"><circle cx="13.500" cy="13.500" r="13.500" fill="#1b2e80"/><circle cx="13.500" cy="8" r="1.700" fill="#fff"/><rect x="12.300" y="11.500" width="2.400" height="9" fill="#fff"/></svg>
<div class="a" style="left:2184px;top:852px;width:132px;height:60px;border-radius:8px;background:#4f85db"></div>
<svg style="left:2735px;top:870px" width="16" height="24" viewBox="0 0 16 24"><path d="M13.500 1.500 3 12l10.500 10.500" fill="none" stroke="#6c6c72" stroke-width="3.600"/></svg>
<svg style="left:2785px;top:870px" width="16" height="24" viewBox="0 0 16 24"><path d="M2.500 1.500 13 12 2.500 22.500" fill="none" stroke="#6c6c72" stroke-width="3.600"/></svg>
<div class="t" style="left:193.40px;top:44.18px;font-size:30.5px;color:#2b2b2b;-webkit-text-stroke:1.0px #2b2b2b;transform:scaleX(1.0208);transform-origin:0 0;letter-spacing:0.297px;">Acme Email</div>
<div class="t" style="left:426.00px;top:48.08px;font-size:24px;color:#333;-webkit-text-stroke:0.8px #333;letter-spacing:-0.059px;">Marketo</div>
<div class="t" style="left:191.27px;top:105.79px;font-size:28px;color:#4f85db;-webkit-text-stroke:0.9px #4f85db;transform:scaleX(1.0634);transform-origin:0 0;letter-spacing:0.691px;">Editor</div>
<div class="t" style="left:321.95px;top:105.79px;font-size:28px;color:#2e2e2e;-webkit-text-stroke:0.25px #2e2e2e;transform:scaleX(1.0475);transform-origin:0 0;letter-spacing:0.586px;">Content management</div>
<div class="t" style="left:664.80px;top:105.79px;font-size:28px;color:#2e2e2e;-webkit-text-stroke:0.25px #2e2e2e;letter-spacing:-0.095px;">Tasks</div>
<div class="t" style="left:784.93px;top:105.79px;font-size:28px;color:#2e2e2e;-webkit-text-stroke:0.25px #2e2e2e;transform:scaleX(1.0661);transform-origin:0 0;letter-spacing:0.694px;">Contributors</div>
<div class="t" style="left:1003.96px;top:105.79px;font-size:28px;color:#2e2e2e;-webkit-text-stroke:0.25px #2e2e2e;transform:scaleX(1.0428);transform-origin:0 0;letter-spacing:0.516px;">Screenshots</div>
<div class="t" style="left:1218.97px;top:105.79px;font-size:28px;color:#2e2e2e;-webkit-text-stroke:0.25px #2e2e2e;transform:scaleX(1.0278);transform-origin:0 0;letter-spacing:0.346px;">Glossary</div>
<div class="t" style="left:1385.00px;top:105.79px;font-size:28px;color:#2e2e2e;-webkit-text-stroke:0.25px #2e2e2e;transform:scaleX(1.0453);transform-origin:0 0;letter-spacing:0.742px;">Apps</div>
<div class="t" style="left:1500.49px;top:105.79px;font-size:28px;color:#2e2e2e;-webkit-text-stroke:0.25px #2e2e2e;transform:scaleX(1.0563);transform-origin:0 0;letter-spacing:0.606px;">More...</div>
<div class="t" style="left:274.96px;top:242.08px;font-size:24px;color:#fff;transform:scaleX(1.0383);transform-origin:0 0;letter-spacing:0.316px;">Filter</div>
<div class="t" style="left:440.55px;top:241.68px;font-size:24px;color:#4f85db;transform:scaleX(1.0457);transform-origin:0 0;letter-spacing:0.402px;">Sort by <span style="-webkit-text-stroke:.7px #4f85db">last added</span></div>
<div class="t" style="left:191.50px;top:324.27px;font-size:28.5px;color:#2b2b2b;-webkit-text-stroke:1.0px #2b2b2b;letter-spacing:1.647px;">25</div>
<div class="t" style="left:234.00px;top:324.27px;font-size:28.5px;color:#2b2b2b;letter-spacing:-0.120px;">keys</div>
<div class="t" style="left:349.21px;top:324.27px;font-size:28.5px;color:#2b2b2b;-webkit-text-stroke:1.0px #2b2b2b;transform:scaleX(1.1944);transform-origin:0 0;">500</div>
<div class="t" style="left:418.62px;top:324.27px;font-size:28.5px;color:#2b2b2b;transform:scaleX(1.0188);transform-origin:0 0;letter-spacing:0.289px;">words</div>
<div class="t" style="left:1914.50px;top:241.88px;font-size:24px;color:#fff;transform:scaleX(1.0176);transform-origin:0 0;letter-spacing:0.205px;">Add key</div>
<div class="t" style="left:2109.98px;top:239.54px;font-size:28px;color:#8a8a8a;transform:scaleX(1.0174);transform-origin:0 0;letter-spacing:0.192px;">Search...</div>
<div class="t" style="left:2765.40px;top:239.75px;font-size:29px;color:#cfcfcf;transform:scaleX(0.8252);transform-origin:0 0;">Aa</div>
<div class="t" style="left:2069.97px;top:313.79px;font-size:28px;color:#2b2b2b;transform:scaleX(1.0328);transform-origin:0 0;letter-spacing:0.427px;">Spanish</div>
<div class="t" style="left:2533.45px;top:316.93px;font-size:24px;color:#4f85db;-webkit-text-stroke:0.7px #4f85db;transform:scaleX(1.0535);transform-origin:0 0;letter-spacing:0.459px;">Bilingual</div>
<div class="t" style="left:2664.43px;top:316.93px;font-size:24px;color:#4f85db;-webkit-text-stroke:0.7px #4f85db;transform:scaleX(1.0713);transform-origin:0 0;letter-spacing:0.583px;">Multilingual</div>
<div class="t" style="left:256.75px;top:414.20px;font-size:29px;color:#8b8b8b;transform:scaleX(1.0233);transform-origin:0 0;letter-spacing:0.258px;">/word/document.xml__/head/title</div>
<div class="t" style="left:256.75px;top:664.20px;font-size:29px;color:#8b8b8b;transform:scaleX(1.0232);transform-origin:0 0;letter-spacing:0.263px;">/word/document.xml__/body/h1#text[2]</div>
<div class="t" style="left:256.75px;top:952.20px;font-size:29px;color:#8b8b8b;transform:scaleX(1.0455);transform-origin:0 0;letter-spacing:0.445px;">/html/head/title</div>
<div class="t" style="left:256.75px;top:1200.20px;font-size:29px;color:#8b8b8b;transform:scaleX(1.0394);transform-origin:0 0;letter-spacing:0.393px;">/html/body/div[1]#text[1]</div>
<div class="t" style="left:256.75px;top:1528.20px;font-size:29px;color:#8b8b8b;transform:scaleX(1.0475);transform-origin:0 0;letter-spacing:0.470px;">/html/body/div[1]#text[2]</div>
<div class="t" style="left:254.75px;top:573.27px;font-size:29.5px;color:#25282e;letter-spacing:0.392px;">Users ranged in age from twenty to sixty.</div>
<div class="t" style="left:256.75px;top:823.02px;font-size:29.5px;color:#25282e;letter-spacing:0.128px;">Tasks were modeled on common goals of online shoppers.</div>
<div class="t" style="left:256.75px;top:1111.02px;font-size:29.5px;color:#25282e;letter-spacing:0.018px;">Welcome to Coded Mails</div>
<div class="t" style="left:254.75px;top:1359.02px;font-size:29.5px;color:#25282e;letter-spacing:0.254px;">Update your email preferences to choose the types of</div>
<div class="t" style="left:255.75px;top:1399.02px;font-size:29.5px;color:#25282e;letter-spacing:0.119px;">emails you receive, or you can unsubscribe from all future</div>
<div class="t" style="left:255.75px;top:1439.02px;font-size:29.5px;color:#25282e;letter-spacing:0.124px;">emails.</div>
<div class="t" style="left:1123.80px;top:573.27px;font-size:29.5px;color:#4e85db;letter-spacing:0.079px;">Los usuarios variaban en <span class="hl">eded</span> de veinte a sesenta.</div>
<div class="t" style="left:1123.80px;top:823.02px;font-size:29.5px;color:#4e85db;letter-spacing:0.080px;">Las tareas se modelaron sobre, objetivos comunes de</div>
<div class="t" style="left:1124.80px;top:863.02px;font-size:29.5px;color:#4e85db;letter-spacing:0.045px;">compradores enl&iacute;nea.</div>
<div class="t" style="left:1124.25px;top:1111.02px;font-size:29.5px;color:#4e85db;letter-spacing:-0.031px;">Bienvenidos a Coded Mails</div>
<div class="t" style="left:1126.00px;top:1359.02px;font-size:29.5px;color:#4e85db;letter-spacing:0.159px;">Actualiza tus preferencias de correo para seleccionar los tipos de</div>
<div class="t" style="left:1125.00px;top:1399.02px;font-size:29.5px;color:#4e85db;letter-spacing:0.227px;">correos que recibes, o puedes darte de baja de todos los futuros</div>
<div class="t" style="left:1125.00px;top:1439.02px;font-size:29.5px;color:#4e85db;letter-spacing:0.374px;">correos.</div>
<div class="t" style="left:2078.40px;top:419.79px;font-size:26px;color:#fff;font-weight:700;">1</div>
<div class="t" style="left:2069.00px;top:1367.99px;font-size:26px;color:#4f85db;-webkit-text-stroke:0.8px #4f85db;letter-spacing:0.938px;">10</div>
<div class="t" style="left:2159.56px;top:423.87px;font-size:28.5px;color:#4f85db;-webkit-text-stroke:0.9px #4f85db;transform:scaleX(1.0356);transform-origin:0 0;letter-spacing:0.438px;">Suggestions</div>
<div class="t" style="left:2377.30px;top:423.87px;font-size:28.5px;color:#2b2b2b;transform:scaleX(1.0262);transform-origin:0 0;letter-spacing:0.309px;">Translation memory</div>
<div class="t" style="left:2227.73px;top:534.20px;font-size:22.5px;color:#7b7b7b;-webkit-text-stroke:0.7px #7b7b7b;transform:scaleX(1.0190);transform-origin:0 0;letter-spacing:0.171px;">LQAI Suggestions (4)</div>
<div class="t" style="left:2225.00px;top:628.95px;font-size:22.5px;color:#222;transform:scaleX(1.0439);transform-origin:0 0;letter-spacing:0.352px;">Accuracy <span style="font-size:16px;position:relative;top:-2px">&bull;</span> Correct your spelling</div>
<div class="t" style="left:2183.95px;top:693.33px;font-size:31.5px;color:#484848;transform:scaleX(1.0489);transform-origin:0 0;letter-spacing:0.602px;"><span style="color:#8f2434;text-decoration:line-through;text-decoration-thickness:2.5px">eded</span> <span style="color:#5a8ddc">edad</span> de veinte</div>
<div class="t" style="left:2185.00px;top:760.45px;font-size:22.5px;color:#555;transform:scaleX(1.0189);transform-origin:0 0;letter-spacing:0.159px;">The word "edad" (age) was misspelled as "eded" in the</div>
<div class="t" style="left:2185.00px;top:796.70px;font-size:22.5px;color:#555;transform:scaleX(1.0363);transform-origin:0 0;letter-spacing:0.284px;">translation.</div>
<div class="t" style="left:2209.25px;top:868.93px;font-size:24px;color:#fff;-webkit-text-stroke:0.8px #fff;transform:scaleX(1.0600);transform-origin:0 0;letter-spacing:0.683px;">Accept</div>
<div class="t" style="left:2348.21px;top:868.93px;font-size:24px;color:#4f85db;-webkit-text-stroke:0.8px #4f85db;transform:scaleX(1.0431);transform-origin:0 0;letter-spacing:0.467px;">Dismiss</div>
<div class="t" style="left:2223.96px;top:987.95px;font-size:22.5px;color:#7a7a7a;-webkit-text-stroke:0.8px #7a7a7a;transform:scaleX(1.0434);transform-origin:0 0;letter-spacing:0.349px;">Correct your spelling</div>
<div class="t" style="left:2184.00px;top:1033.33px;font-size:31.5px;color:#4a4a4a;letter-spacing:0.443px;">enl&iacute;nea</div>
<div class="t" style="left:2222.91px;top:1148.45px;font-size:22.5px;color:#7a7a7a;-webkit-text-stroke:0.8px #7a7a7a;transform:scaleX(1.0451);transform-origin:0 0;letter-spacing:0.358px;">Inconsistency with style guide</div>
<div class="t" style="left:2183.93px;top:1192.83px;font-size:31.5px;color:#4a4a4a;transform:scaleX(1.0363);transform-origin:0 0;letter-spacing:0.453px;">Bienvenidos a Coded Mails</div>
<div class="t" style="left:2222.92px;top:1307.95px;font-size:22.5px;color:#7a7a7a;-webkit-text-stroke:0.8px #7a7a7a;transform:scaleX(1.0425);transform-origin:0 0;letter-spacing:0.328px;">Inconsistency in the translation</div>
<div class="t" style="left:2182.91px;top:1353.33px;font-size:31.5px;color:#4a4a4a;transform:scaleX(1.0450);transform-origin:0 0;letter-spacing:0.485px;">...de correo para seleccionar los tipos de</div>
<div class="t" style="left:2183.95px;top:1401.33px;font-size:31.5px;color:#4a4a4a;transform:scaleX(1.0461);transform-origin:0 0;letter-spacing:0.514px;">correos que recibes...</div>
</body></html>
